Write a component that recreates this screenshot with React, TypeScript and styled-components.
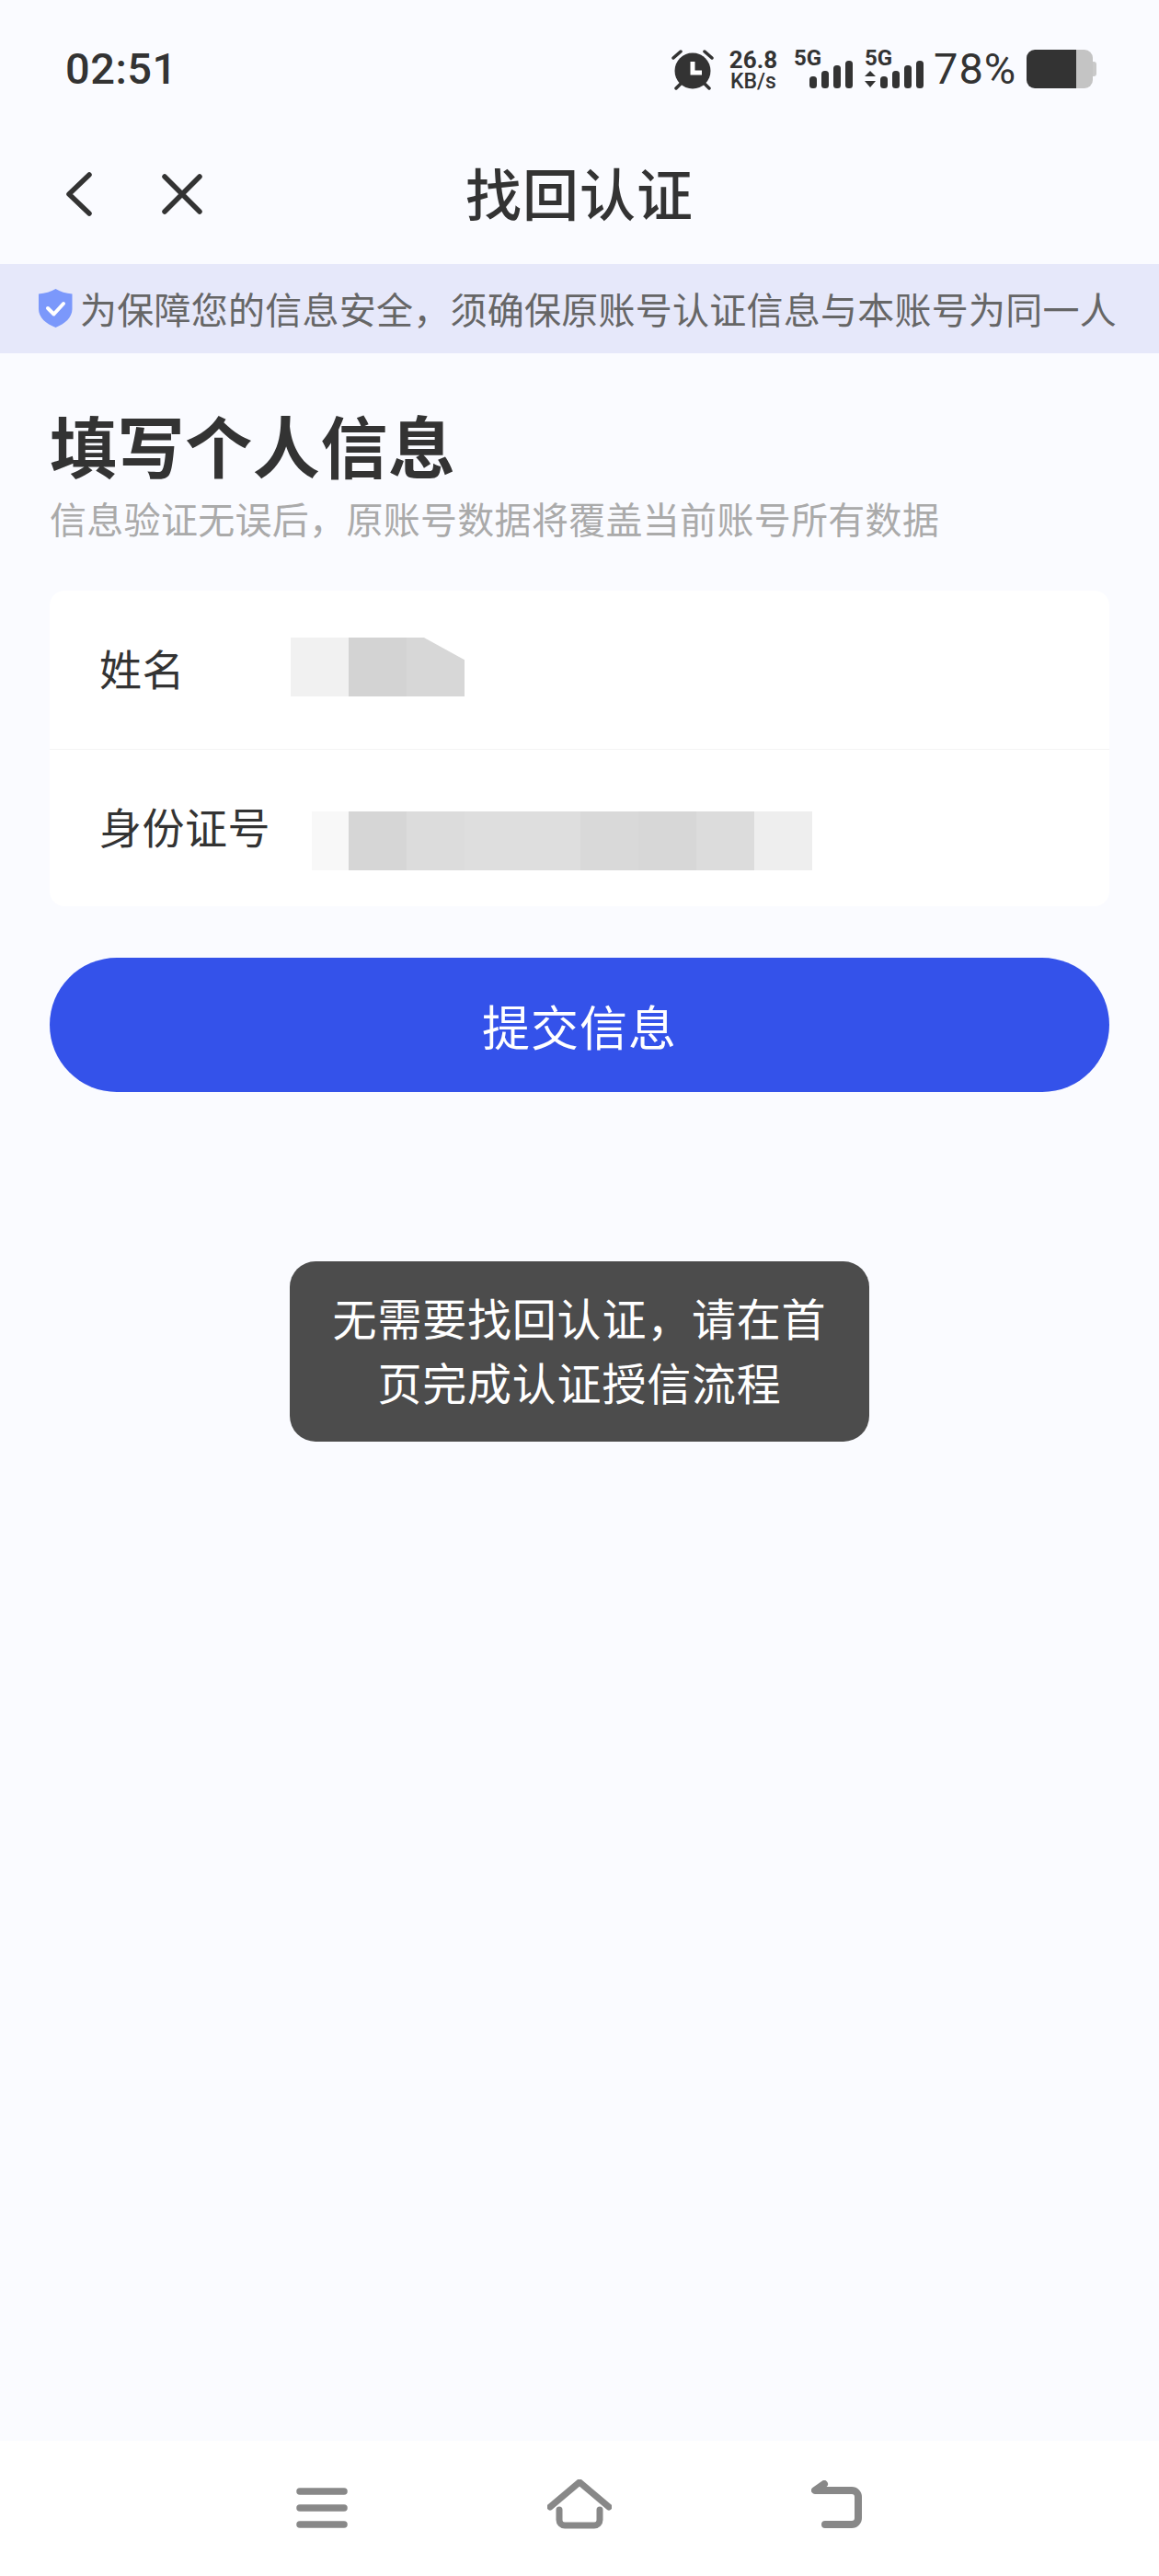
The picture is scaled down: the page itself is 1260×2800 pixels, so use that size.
import React from "react";
import styled, { createGlobalStyle } from "styled-components";

const Global = createGlobalStyle`
  html, body { margin: 0; padding: 0; background: #fafbff; }
  * { box-sizing: border-box; }
`;

const Page = styled.div`
  position: relative;
  width: 1260px;
  height: 2800px;
  display: flex;
  flex-direction: column;
  background: #fafbff;
  color: #333;
  font-family: "Noto Sans CJK SC", "Noto Sans", sans-serif;
`;

const StatusBar = styled.div`
  height: 134px;
  padding: 54px 68px 0 71px;
  display: flex;
  justify-content: space-between;
  align-items: flex-start;
  font-family: "Roboto", "Noto Sans", sans-serif;
`;

const Clock = styled.div`
  font-size: 47px;
  line-height: 42px;
  font-weight: 500;
  letter-spacing: 0.5px;
`;

const StatusIcons = styled.div`
  display: flex;
  align-items: flex-start;
  height: 42px;
`;

const Speed = styled.div`
  width: 60px;
  margin: 0 14px 0 13px;
  display: flex;
  flex-direction: column;
  align-items: center;
  font-weight: 700;
`;

const SpeedValue = styled.span`
  font-size: 26px;
  line-height: 22px;
`;

const SpeedUnit = styled.span`
  font-size: 23px;
  line-height: 21px;
  margin-top: 2px;
  font-weight: 500;
`;

const Signal = styled.div<{ $gap: number }>`
  position: relative;
  width: 64px;
  height: 42px;
  display: flex;
  align-items: flex-end;
  justify-content: flex-end;
  margin-right: ${(p) => p.$gap}px;
`;

const NetLabel = styled.span`
  position: absolute;
  left: 0;
  top: 0;
  font-size: 24px;
  line-height: 18px;
  font-weight: 700;
`;

const Percent = styled.div`
  width: 88px;
  margin-right: 13px;
  font-size: 47px;
  line-height: 42px;
  letter-spacing: 1px;
  text-align: center;
`;

const NavBar = styled.div`
  height: 153px;
  padding-left: 71px;
  display: grid;
  grid-template-columns: 1fr auto 1fr;
  align-items: center;
`;

const NavActions = styled.div`
  display: flex;
  align-items: center;
  gap: 75px;
`;

const NavTitle = styled.h1`
  margin: 0 0 3px -71px;
  font-size: 61px;
  line-height: 80px;
  font-weight: 500;
  letter-spacing: 1px;
`;

const Banner = styled.div`
  height: 97px;
  padding: 0 0 2px 42px;
  display: flex;
  align-items: center;
  gap: 8px;
  background: #e6e8fa;
  color: #666;
  font-size: 40px;
  letter-spacing: 0.25px;
  white-space: nowrap;
`;

const Content = styled.main`
  flex: 1;
  padding: 0 54px;
`;

const Heading = styled.h2`
  margin: 58px 0 0;
  font-size: 73px;
  line-height: 80px;
  font-weight: 700;
  letter-spacing: 0.6px;
`;

const Subheading = styled.p`
  margin: 13px 0 0;
  color: #aaa;
  font-size: 40px;
  line-height: 56px;
  letter-spacing: 0.3px;
`;

const Card = styled.section`
  margin-top: 51px;
  border-radius: 16px;
  background: #fff;
`;

const Row = styled.div`
  height: 172px;
  padding-left: 54px;
  display: flex;
  align-items: center;
  & + & {
    height: 171px;
    border-top: 1px solid #f4f4f4;
  }
`;

const Label = styled.span`
  width: 208px;
  margin-bottom: 7px;
  font-size: 46px;
  line-height: 60px;
  letter-spacing: 0.5px;
`;

const Mosaic = styled.div<{ $shift: number; $indent: number }>`
  display: flex;
  margin: ${(p) => p.$shift}px 0 0 ${(p) => p.$indent}px;
`;

const Cell = styled.span<{ $tone: string; $w?: number; $cut?: boolean }>`
  display: block;
  width: ${(p) => p.$w ?? 63}px;
  height: 64px;
  background: ${(p) => p.$tone};
  ${(p) => (p.$cut ? "clip-path: polygon(0 0, 30% 0, 100% 38%, 100% 100%, 0 100%);" : "")}
`;

const SubmitButton = styled.button`
  width: 100%;
  height: 146px;
  margin-top: 56px;
  border: 0;
  border-radius: 73px;
  background: #3452ea;
  color: #fff;
  font-family: inherit;
  font-size: 52px;
  letter-spacing: 1px;
`;

const Toast = styled.div`
  position: absolute;
  left: 315px;
  top: 1371px;
  width: 630px;
  height: 196px;
  padding: 0 40px 7px;
  display: flex;
  align-items: center;
  justify-content: center;
  border-radius: 28px;
  background: #4c4c4c;
  color: #fff;
  font-size: 48px;
  line-height: 70px;
  letter-spacing: 0.8px;
  text-align: center;
`;

const SystemBar = styled.nav`
  height: 147px;
  display: grid;
  grid-template-columns: repeat(3, 280px);
  justify-content: center;
  justify-items: center;
  padding-top: 51px;
  background: #fff;
`;

const Alarm = () => (
  <svg width="46" height="44" viewBox="728 53 46 44" fill="none">
    <circle cx="751" cy="76" r="19.5" fill="#333" />
    <path d="M730 62l8-7M772 62l-8-7M733 95l5-5M769 95l-5-5" stroke="#333" strokeWidth="3.5" strokeLinecap="round" />
    <path d="M751 66v12h10" stroke="#fff" strokeWidth="5" />
  </svg>
);

const Bars = ({ arrows }: { arrows?: boolean }) => (
  <svg width={arrows ? 64 : 47} height="30" viewBox={arrows ? "-17 0 64 30" : "0 0 47 30"} fill="#333">
    {arrows && <path d="M-17 13l6-6 6 6zM-17 18h12l-6 7z" transform="translate(0 4)" />}
    <rect x="0" y="17" width="8" height="13" rx="3.5" />
    <rect x="13" y="11" width="8" height="19" rx="3.5" />
    <rect x="26" y="5" width="8" height="25" rx="3.5" />
    <rect x="39" y="0" width="8" height="30" rx="3.5" />
  </svg>
);

const Battery = () => (
  <svg width="76" height="42" viewBox="0 0 76 42">
    <path d="M70 13h3a3 3 0 0 1 3 3v10a3 3 0 0 1-3 3h-3z" fill="#c9c9c9" />
    <path d="M54 0h9a9 9 0 0 1 9 9v24a9 9 0 0 1-9 9H54z" fill="#c4c4c4" />
    <path d="M9 0h45v42H9a9 9 0 0 1-9-9V9a9 9 0 0 1 9-9z" fill="#333" />
  </svg>
);

const BackIcon = () => (
  <svg width="30" height="50" viewBox="0 0 30 50" fill="none">
    <path d="M26 4L4 25l22 21" stroke="#333" strokeWidth="5.5" strokeLinecap="round" strokeLinejoin="round" />
  </svg>
);

const CloseIcon = () => (
  <svg width="44" height="44" viewBox="0 0 44 44" fill="none">
    <path d="M3 3l38 38M41 3L3 41" stroke="#333" strokeWidth="5.5" strokeLinecap="round" />
  </svg>
);

const Shield = () => (
  <svg width="37" height="42" viewBox="0 0 37 42">
    <path d="M18.5 0c5 3 11 5 18 5.500V22c0 9-8 16-18 20C8 38 0 31 0 22V5.500C7 5 13.500 3 18.500 0z" fill="#7b98fb" />
    <path d="M10 21l6.500 6.500L27 16" fill="none" stroke="#fff" strokeWidth="4" strokeLinecap="round" strokeLinejoin="round" />
  </svg>
);

const MenuKey = () => (
  <svg width="56" height="44" viewBox="0 0 56 44" fill="none">
    <path d="M4 4h48M4 22h48M4 40h48" stroke="#888" strokeWidth="7.5" strokeLinecap="round" />
  </svg>
);

const HomeKey = () => (
  <svg width="70" height="54" viewBox="0 0 70 54" fill="none" style={{ marginTop: -9 }}>
    <path d="M3 30L35 3l32 27" stroke="#888" strokeWidth="7" strokeLinecap="round" strokeLinejoin="round" />
    <path d="M13 33v11a6 6 0 0 0 6 6h32a6 6 0 0 0 6-6V33" stroke="#888" strokeWidth="7" strokeLinecap="round" />
  </svg>
);

const ReturnKey = () => (
  <svg width="56" height="52" viewBox="0 0 56 52" fill="none" style={{ marginTop: -8 }}>
    <path d="M14 4L4 11h40a7 7 0 0 1 7 7v23a7 7 0 0 1-7 7H15" stroke="#888" strokeWidth="8" strokeLinecap="round" strokeLinejoin="round" />
  </svg>
);

const nameTones = ["#f1f1f1", "#d3d3d3", "#d7d7d7"];
const idTones = ["#d6d6d6", "#dcdcdc", "#dedede", "#dedede", "#d9d9d9", "#d7d7d7", "#dcdcdc", "#eeeeee"];

const COMMA = "\uFF0C";
const bannerText = `为保障您的信息安全${COMMA}须确保原账号认证信息与本账号为同一人`;
const subText = `信息验证无误后${COMMA}原账号数据将覆盖当前账号所有数据`;
const toastText = `无需要找回认证${COMMA}请在首页完成认证授信流程`;

export default function App() {
  return (
    <Page>
      <Global />
      <StatusBar>
        <Clock>02:51</Clock>
        <StatusIcons>
          <Alarm />
          <Speed>
            <SpeedValue>26.8</SpeedValue>
            <SpeedUnit>KB/s</SpeedUnit>
          </Speed>
          <Signal $gap={13}>
            <NetLabel>5G</NetLabel>
            <Bars />
          </Signal>
          <Signal $gap={11}>
            <NetLabel>5G</NetLabel>
            <Bars arrows />
          </Signal>
          <Percent>78%</Percent>
          <Battery />
        </StatusIcons>
      </StatusBar>

      <NavBar>
        <NavActions>
          <BackIcon />
          <CloseIcon />
        </NavActions>
        <NavTitle>找回认证</NavTitle>
        <span />
      </NavBar>

      <Banner>
        <Shield />
        {bannerText}
      </Banner>

      <Content>
        <Heading>填写个人信息</Heading>
        <Subheading>{subText}</Subheading>

        <Card>
          <Row>
            <Label>姓名</Label>
            <Mosaic $shift={-6} $indent={0}>
              {nameTones.map((tone, i) => (
                <Cell key={i} $tone={tone} $cut={i === 2} />
              ))}
            </Mosaic>
          </Row>
          <Row>
            <Label>身份证号</Label>
            <Mosaic $shift={28} $indent={23}>
              <Cell $tone="#f8f8f8" $w={40} />
              {idTones.map((tone, i) => (
                <Cell key={i} $tone={tone} />
              ))}
            </Mosaic>
          </Row>
        </Card>

        <SubmitButton>提交信息</SubmitButton>
      </Content>

      <Toast>{toastText}</Toast>

      <SystemBar>
        <MenuKey />
        <HomeKey />
        <ReturnKey />
      </SystemBar>
    </Page>
  );
}
